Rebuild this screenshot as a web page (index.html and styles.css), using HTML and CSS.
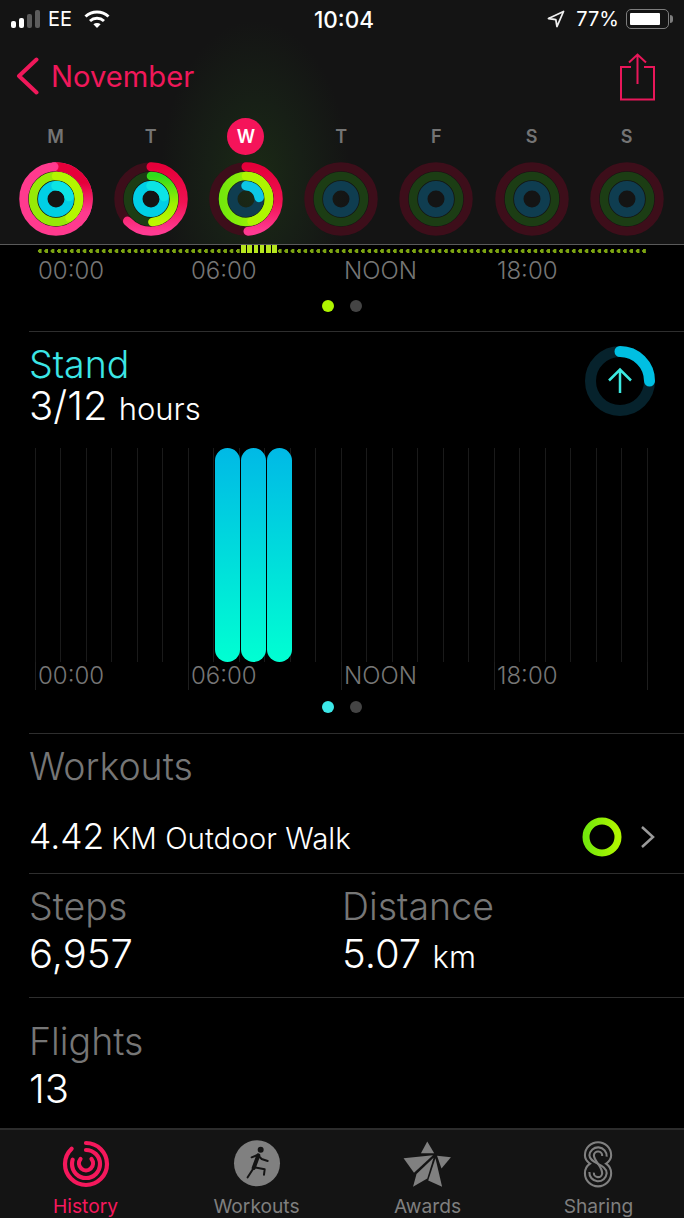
FILE: index.html
```html
<!DOCTYPE html>
<html lang="en">
<head>
    <meta charset="UTF-8">
    <meta name="viewport" content="width=device-width, initial-scale=1.0">
    <title>Activity History</title>
    <link rel="stylesheet" href="styles.css">
</head>
<body>
    <svg class="gradients" aria-hidden="true">
        <defs>
            <linearGradient id="move" x1="0" y1="0" x2="0" y2="1">
                <stop offset="0" stop-color="#e6003a"/>
                <stop offset="0.55" stop-color="#f01252"/>
                <stop offset="1" stop-color="#ff3a92"/>
            </linearGradient>
            <linearGradient id="move-fade" x1="0" y1="0" x2="0" y2="1">
                <stop offset="0.25" stop-color="#e6003a"/>
                <stop offset="0.7" stop-color="#ff3a8e"/>
            </linearGradient>
            <linearGradient id="exercise" x1="0" y1="0" x2="0" y2="1">
                <stop offset="0" stop-color="#30dc1c"/>
                <stop offset="0.6" stop-color="#9cf000"/>
                <stop offset="1" stop-color="#bcf800"/>
            </linearGradient>
            <linearGradient id="exercise-full" x1="0" y1="0" x2="1" y2="0">
                <stop offset="0" stop-color="#74e80c"/>
                <stop offset="1" stop-color="#b0f600"/>
            </linearGradient>
        </defs>
    </svg>

    <header class="top">
        <div class="status-bar">
            <div class="status-left">
                <span class="signal">
                    <i class="on s1"></i><i class="on s2"></i><i class="s3"></i><i class="s4"></i>
                </span>
                <span>EE</span>
                <svg class="wifi" viewBox="0 0 26 19" fill="none" stroke="#fff" stroke-width="3">
                    <path d="M1.5 6.5C8 .5 18 .5 24.5 6.5"/>
                    <path d="M6 11c4-3.6 10-3.6 14 0"/>
                    <path d="M13 18l-3.6-3.8c2-1.7 5.2-1.7 7.2 0z" fill="#fff" stroke="none"/>
                </svg>
            </div>
            <div class="status-time">10:04</div>
            <div class="status-right">
                <svg class="location" viewBox="0 0 18 18" fill="none" stroke="#eee" stroke-width="1.8" stroke-linejoin="round">
                    <path d="M1.5 8.5 16.5 1.5 10 16.5 8.8 9.6z"/>
                </svg>
                <span>77%</span>
                <span class="battery"><i></i></span>
                <span class="battery-nub"></span>
            </div>
        </div>

        <nav class="nav-bar">
            <a class="back">
                <svg class="back-icon" viewBox="0 0 23 38" fill="none" stroke="#f0185a" stroke-width="4" stroke-linecap="round" stroke-linejoin="round">
                    <path d="M20.5 2.5 3 19l17.5 16.500"/>
                </svg>
                <span>November</span>
            </a>
            <svg class="share-icon" viewBox="0 0 37 48" fill="none" stroke="#e9175a" stroke-width="2">
                <path d="M12 14H2v32.500h33V14H25"/>
                <path d="M18.500 31V2M10 9.500l8.500-8 8.500 8"/>
            </svg>
        </nav>

        <div class="days">
            <div class="day">
                <span class="day-name">M</span>
                <svg class="rings" viewBox="0 0 74 74" fill="none">
                    <circle class="move-arc" stroke="#ff3a8e" cx="37" cy="37" r="32.250"/>
                    <path class="move-arc butt" stroke="url(#move-fade)" pathLength="100" stroke-dasharray="38 100" d="M37 4.750a32.250 32.250 0 1 1 0 64.500a32.250 32.250 0 1 1 0-64.500"/>
                    <circle class="move-cap" cx="35" cy="4.800" r="4.500"/>
                    <path class="exercise-arc" stroke="#96ea06" d="M37 14a23 23 0 1 1 0 46a23 23 0 1 1 0-46"/>
                    <path class="exercise-arc" stroke="#b4f600" pathLength="100" stroke-dasharray="40 100" d="M37 14a23 23 0 1 1 0 46a23 23 0 1 1 0-46"/>
                    <path class="stand-arc" stroke="#00cfe6" d="M37 23.750a13.250 13.250 0 1 1 0 26.500a13.250 13.250 0 1 1 0-26.500"/>
                    <path class="stand-arc" stroke="#0ce4e4" pathLength="100" stroke-dasharray="22 100" d="M37 23.750a13.250 13.250 0 1 1 0 26.500a13.250 13.250 0 1 1 0-26.500"/>
                </svg>
            </div>
            <div class="day">
                <span class="day-name">T</span>
                <svg class="rings" viewBox="0 0 74 74" fill="none">
                    <circle class="track-move" cx="37" cy="37" r="32.250"/>
                    <circle class="track-exercise" cx="37" cy="37" r="23"/>
                    <path class="move-arc" stroke="url(#move)" pathLength="100" stroke-dasharray="63 100" d="M37 4.750a32.250 32.250 0 1 1 0 64.500a32.250 32.250 0 1 1 0-64.500"/>
                    <path class="exercise-arc" stroke="url(#exercise)" pathLength="100" stroke-dasharray="49 100" d="M37 14a23 23 0 1 1 0 46a23 23 0 1 1 0-46"/>
                    <path class="stand-arc" stroke="#00cfe6" d="M37 23.750a13.250 13.250 0 1 1 0 26.500a13.250 13.250 0 1 1 0-26.500"/>
                    <path class="stand-arc" stroke="#0ce4e4" pathLength="100" stroke-dasharray="22 100" d="M37 23.750a13.250 13.250 0 1 1 0 26.500a13.250 13.250 0 1 1 0-26.500"/>
                </svg>
            </div>
            <div class="day">
                <span class="day-name today">W</span>
                <svg class="rings" viewBox="0 0 74 74" fill="none">
                    <circle class="track-move" cx="37" cy="37" r="32.250"/>
                    <circle class="track-stand" cx="37" cy="37" r="13.250"/>
                    <path class="move-arc" stroke="url(#move)" pathLength="100" stroke-dasharray="49 100" d="M37 4.750a32.250 32.250 0 1 1 0 64.500a32.250 32.250 0 1 1 0-64.500"/>
                    <path class="exercise-arc" stroke="url(#exercise-full)" d="M37 14a23 23 0 1 1 0 46a23 23 0 1 1 0-46"/>
                    <path class="exercise-arc" stroke="#aef500" pathLength="100" stroke-dasharray="46 100" d="M37 14a23 23 0 1 1 0 46a23 23 0 1 1 0-46"/>
                    <path class="stand-arc" stroke="#0cc6e6" pathLength="100" stroke-dasharray="23 100" d="M37 23.750a13.250 13.250 0 1 1 0 26.500a13.250 13.250 0 1 1 0-26.500"/>
                </svg>
            </div>
            <div class="day">
                <span class="day-name">T</span>
                <svg class="rings" viewBox="0 0 74 74" fill="none"><use href="#empty-rings"/></svg>
            </div>
            <div class="day">
                <span class="day-name">F</span>
                <svg class="rings" viewBox="0 0 74 74" fill="none"><use href="#empty-rings"/></svg>
            </div>
            <div class="day">
                <span class="day-name">S</span>
                <svg class="rings" viewBox="0 0 74 74" fill="none"><use href="#empty-rings"/></svg>
            </div>
            <div class="day">
                <span class="day-name">S</span>
                <svg class="rings" viewBox="0 0 74 74" fill="none">
                    <g id="empty-rings">
                        <circle class="track-move" cx="37" cy="37" r="32.250"/>
                        <circle class="track-exercise" cx="37" cy="37" r="23"/>
                        <circle class="track-stand" cx="37" cy="37" r="13.250"/>
                    </g>
                </svg>
            </div>
        </div>
    </header>

    <main class="content">
        <section class="move-hours">
            <div class="move-strip">
                <span class="strip-dots before"></span>
                <span class="strip-bars"><i></i><i></i><i></i><i></i><i></i><i></i></span>
                <span class="strip-dots after"></span>
            </div>
            <div class="hours"><span>00:00</span><span>06:00</span><span>NOON</span><span>18:00</span></div>
            <div class="pager lime"><i></i><i></i></div>
        </section>

        <section class="stand">
            <div class="stand-head">
                <div>
                    <div class="stand-title">Stand</div>
                    <div class="value stand-value">3/12 <small>hours</small></div>
                </div>
                <svg class="stand-ring" viewBox="0 0 72 72" fill="none" stroke-width="11">
                    <circle cx="36" cy="36" r="29.500" stroke="#06222c"/>
                    <path d="M36 6.500a29.500 29.500 0 1 1 0 59a29.500 29.500 0 1 1 0-59" pathLength="100" stroke-dasharray="25 100" stroke="#00bfe2" stroke-linecap="round"/>
                    <path d="M36 48V25M25 35.500 36 24.500 47 35.500" stroke="#3ce8e0" stroke-width="2.500"/>
                </svg>
            </div>
            <div class="chart">
                <div class="plot">
                    <span class="bar"></span><span class="bar"></span><span class="bar"></span>
                </div>
                <div class="hours"><span>00:00</span><span>06:00</span><span>NOON</span><span>18:00</span></div>
            </div>
            <div class="pager cyan"><i></i><i></i></div>
        </section>

        <section class="workouts">
            <h2 class="label">Workouts</h2>
            <div class="workout-row">
                <div class="value">4.42 <small>KM Outdoor Walk</small></div>
                <svg class="workout-ring" viewBox="0 0 40 40" fill="none" stroke-width="7">
                    <circle cx="20" cy="20" r="16" stroke="url(#exercise-full)"/>
                </svg>
                <svg class="chevron" viewBox="0 0 16 24" fill="none" stroke="#9a9a9a" stroke-width="2.500">
                    <path d="M2 2l11 10L2 22"/>
                </svg>
            </div>
        </section>

        <section class="stats">
            <div>
                <h2 class="label">Steps</h2>
                <div class="value">6,957</div>
            </div>
            <div>
                <h2 class="label">Distance</h2>
                <div class="value">5.07 <small>km</small></div>
            </div>
        </section>

        <section class="flights">
            <h2 class="label">Flights</h2>
            <div class="value">13</div>
        </section>
    </main>

    <footer class="tab-bar">
        <a class="tab active">
            <svg class="tab-icon" viewBox="0 0 48 48" fill="none" stroke="#f5185c" stroke-width="4.200" stroke-linecap="round">
                <path pathLength="100" stroke-dasharray="88 100" d="M24 3a21 21 0 1 1 0 42a21 21 0 1 1 0-42"/>
                <path pathLength="100" stroke-dasharray="80 100" d="M24 10a14 14 0 1 1 0 28a14 14 0 1 1 0-28"/>
                <path d="M29.500 19a7 7 0 1 1-11 0"/>
            </svg>
            <span>History</span>
        </a>
        <a class="tab">
            <svg class="tab-icon" viewBox="550 22 144 144">
                <circle cx="622" cy="92" r="69" fill="#808080"/>
                <circle cx="633" cy="51" r="9" fill="#141414"/>
                <path d="M606 74l18-7 12 12 18 6M613 104l32 6-2 16M612 106l-18 28" fill="none" stroke="#141414" stroke-width="6" stroke-linecap="round" stroke-linejoin="round"/>
                <path d="M626 68l-14 38" fill="none" stroke="#141414" stroke-width="12" stroke-linecap="round"/>
            </svg>
            <span>Workouts</span>
        </a>
        <a class="tab">
            <svg class="tab-icon star" viewBox="30 20 160 152" fill="#808080">
                <path d="M110 25 132 62H90z"/>
                <path d="M35 78 128 68 68 124z"/>
                <path d="M76 128 130 76 110 142 65 168z"/>
                <path d="M136 78 157 168 113 148z"/>
                <path d="M141 70 185 75 155 110z"/>
            </svg>
            <span>Awards</span>
        </a>
        <a class="tab">
            <svg class="tab-icon sharing" viewBox="578 18 94 150" fill="none" stroke="#808080" stroke-width="6.500">
                <path d="M584 66A41 41 0 0 1 666 66C666 82 656 88 650 92 656 96 666 104 666 122A41 41 0 0 1 584 122C584 104 594 96 600 92 594 88 584 82 584 66Z"/>
                <path d="M652 70A27 27 0 0 0 598 66C598 92 652 92 652 122A27 27 0 0 1 598 118"/>
                <path d="M638 68A13 13 0 0 0 612 66C612 84 638 100 638 122A13 13 0 0 1 612 120"/>
            </svg>
            <span>Sharing</span>
        </a>
    </footer>
</body>
</html>
```

FILE: styles.css
```css
* {
    box-sizing: border-box;
}

html, body {
    height: 100%;
}

body {
    display: flex;
    flex-direction: column;
    margin: 0;
    overflow: hidden;
    font-family: 'Inter', 'Liberation Sans', sans-serif;
    font-weight: 300;
    background-color: #000000;
    color: #ffffff;
}

.gradients {
    display: block;
    width: 0;
    height: 0;
}

/* header */

.top {
    flex: none;
    height: 245px;
    background: radial-gradient(ellipse 95px 160px at 255px 180px, #1b2a15 0%, #171f16 50%, transparent 100%), #141414;
    border-bottom: 1px solid #5a5a5a;
}

.status-bar {
    display: grid;
    grid-template-columns: 1fr auto 1fr;
    align-items: center;
    height: 38px;
    padding: 0 11px;
    font-size: 20px;
    font-weight: 400;
}

.status-left, .status-right {
    display: flex;
    align-items: center;
}

.status-left {
    gap: 8px;
}

.status-right {
    justify-content: flex-end;
}

.status-time {
    margin-left: 4px;
    font-size: 22.500px;
    font-weight: 500;
}

.signal {
    display: flex;
    align-items: flex-end;
    gap: 3px;
    height: 18px;
}

.signal i {
    width: 5px;
    border-radius: 2px;
    background-color: #5c5c5c;
}

.signal i.on {
    background-color: #ffffff;
}

.s1 { height: 7px; }
.s2 { height: 10px; }
.s3 { height: 14px; }
.s4 { height: 18px; }

.wifi {
    width: 26px;
    height: 19px;
    margin-left: 4px;
}

.location {
    width: 18px;
    height: 18px;
    margin-right: 11px;
}

.battery {
    display: block;
    width: 43px;
    height: 20px;
    margin-left: 7px;
    padding: 3px;
    border: 1.500px solid #7d7d7d;
    border-radius: 5px;
}

.battery i {
    display: block;
    width: 30px;
    height: 100%;
    border-radius: 1px;
    background-color: #ffffff;
}

.battery-nub {
    width: 3px;
    height: 8px;
    margin-left: 1px;
    border-radius: 0 3px 3px 0;
    background-color: #7d7d7d;
}

.nav-bar {
    display: flex;
    justify-content: space-between;
    align-items: flex-start;
    height: 80px;
    padding: 15px 28px 0 16px;
}

.back {
    display: flex;
    align-items: center;
    gap: 12px;
    margin-top: 4px;
    color: #f0185a;
    font-size: 29.200px;
    font-weight: 400;
}

.back-icon {
    width: 23px;
    height: 38px;
}

.share-icon {
    width: 37px;
    height: 48px;
}

.days {
    display: grid;
    grid-template-columns: repeat(7, 95.200px);
    padding-left: 8px;
}

.day {
    display: flex;
    flex-direction: column;
    align-items: center;
}

.day-name {
    display: flex;
    justify-content: center;
    align-items: center;
    width: 37px;
    height: 37px;
    margin-bottom: 7px;
    border-radius: 50%;
    color: #747474;
    font-size: 18px;
    font-weight: 600;
}

.day-name.today {
    background-color: #f5145a;
    color: #ffffff;
}

.rings {
    width: 74px;
    height: 74px;
}

.move-arc {
    stroke-width: 9;
    stroke-linecap: round;
}

.move-arc.butt {
    stroke-linecap: butt;
}

.move-cap {
    fill: #ff3a8e;
}

.exercise-arc {
    stroke-width: 8.500;
    stroke-linecap: round;
}

.stand-arc {
    stroke-width: 9.500;
    stroke-linecap: round;
}

.track-move {
    stroke: #3d0e1a;
    stroke-width: 9;
}

.track-exercise {
    stroke: #1c3d14;
    stroke-width: 8.500;
}

.track-stand {
    stroke: #0f3d50;
    stroke-width: 9.500;
}

/* content */

.content {
    flex: 1;
    min-height: 0;
}

.hours {
    display: grid;
    grid-template-columns: repeat(4, 153px);
    padding-left: 38px;
    color: #767676;
    font-size: 24px;
    line-height: 27px;
}

.pager {
    display: flex;
    justify-content: center;
    gap: 16px;
}

.pager i {
    width: 12px;
    height: 12px;
    border-radius: 50%;
    background-color: #444444;
}

.pager.lime i:first-child {
    background-color: #aef500;
}

.pager.cyan i:first-child {
    background-color: #3ce8e8;
}

.move-hours {
    height: 86px;
}

.move-strip {
    display: flex;
    align-items: center;
    height: 8px;
    margin-bottom: 4px;
    padding-left: 37px;
}

.strip-dots {
    height: 4px;
    margin-top: 3px;
    background-image: radial-gradient(circle 2px at 3px 2px, #7da512 95%, transparent 100%);
    background-size: 6.400px 4px;
}

.strip-dots.before {
    width: 204px;
}

.strip-dots.after {
    width: 370px;
}

.strip-bars {
    display: flex;
    justify-content: space-between;
    width: 36px;
}

.strip-bars i {
    width: 4.500px;
    height: 8px;
    background-color: #b6e61e;
}

.move-hours .pager {
    margin-top: 16px;
}

.stand, .workouts, .stats, .flights {
    margin-left: 29px;
    border-top: 1px solid #2e2e2e;
}

.stand {
    height: 402px;
}

.stand .chart, .stand .pager {
    margin-left: -29px;
}

.stand-head {
    display: flex;
    justify-content: space-between;
    height: 116px;
    padding: 13px 28px 0 0;
}

.stand-title {
    color: #3ce6e6;
    font-size: 37.500px;
    line-height: 40px;
}

.value {
    font-size: 40px;
    line-height: 44px;
}

.value small {
    font-size: 31px;
}

.stand-value {
    margin-top: -1px;
}

.stand-ring {
    width: 72px;
    height: 72px;
}

.chart {
    height: 242px;
    margin-bottom: 11px;
    background-image: repeating-linear-gradient(90deg, #1e1e1e 0 1px, transparent 1px 153px);
    background-position: 35px 0;
    background-repeat: no-repeat;
    background-size: 613px 100%;
}

.plot {
    display: flex;
    gap: 1.500px;
    height: 214px;
    padding-left: 215px;
    background-image: repeating-linear-gradient(90deg, #1a1a1a 0 1px, transparent 1px 25.500px);
    background-position: 35px 0;
    background-repeat: no-repeat;
    background-size: 613px 100%;
}

.bar {
    width: 24.500px;
    border-radius: 12.500px;
    background-image: linear-gradient(#00b9e6, #00ffd2);
}

.workouts {
    height: 140px;
}

.label {
    margin: 0;
    color: #767676;
    font-size: 37.500px;
    font-weight: 300;
    line-height: 44px;
}

.workouts .label {
    height: 67px;
    padding-top: 11px;
}

.workout-row {
    display: flex;
    align-items: center;
    height: 72px;
    padding-right: 28px;
}

.workout-row .value {
    flex: 1;
    font-size: 35.500px;
    word-spacing: -3px;
}

.workout-row .value small {
    font-size: 29.500px;
    word-spacing: 0;
}

.workout-ring {
    width: 40px;
    height: 40px;
}

.chevron {
    width: 16px;
    height: 24px;
    margin-left: 18px;
}

.stats {
    display: grid;
    grid-template-columns: 313px 1fr;
    height: 124px;
    padding-top: 11px;
}

.stats .value, .flights .value {
    margin-top: 3px;
}

.flights {
    height: 132px;
    padding-top: 22px;
}

/* tabs */

.tab-bar {
    flex: none;
    display: grid;
    grid-template-columns: repeat(4, 171px);
    height: 90px;
    padding-top: 10px;
    border-top: 2px solid #2c2c2c;
    background-color: #141414;
}

.tab {
    display: flex;
    flex-direction: column;
    align-items: center;
    color: #7f7f7f;
    font-size: 19.200px;
    font-weight: 400;
}

.tab.active {
    color: #f5185c;
}

.tab-icon {
    height: 48px;
    margin-bottom: 6px;
}
```
